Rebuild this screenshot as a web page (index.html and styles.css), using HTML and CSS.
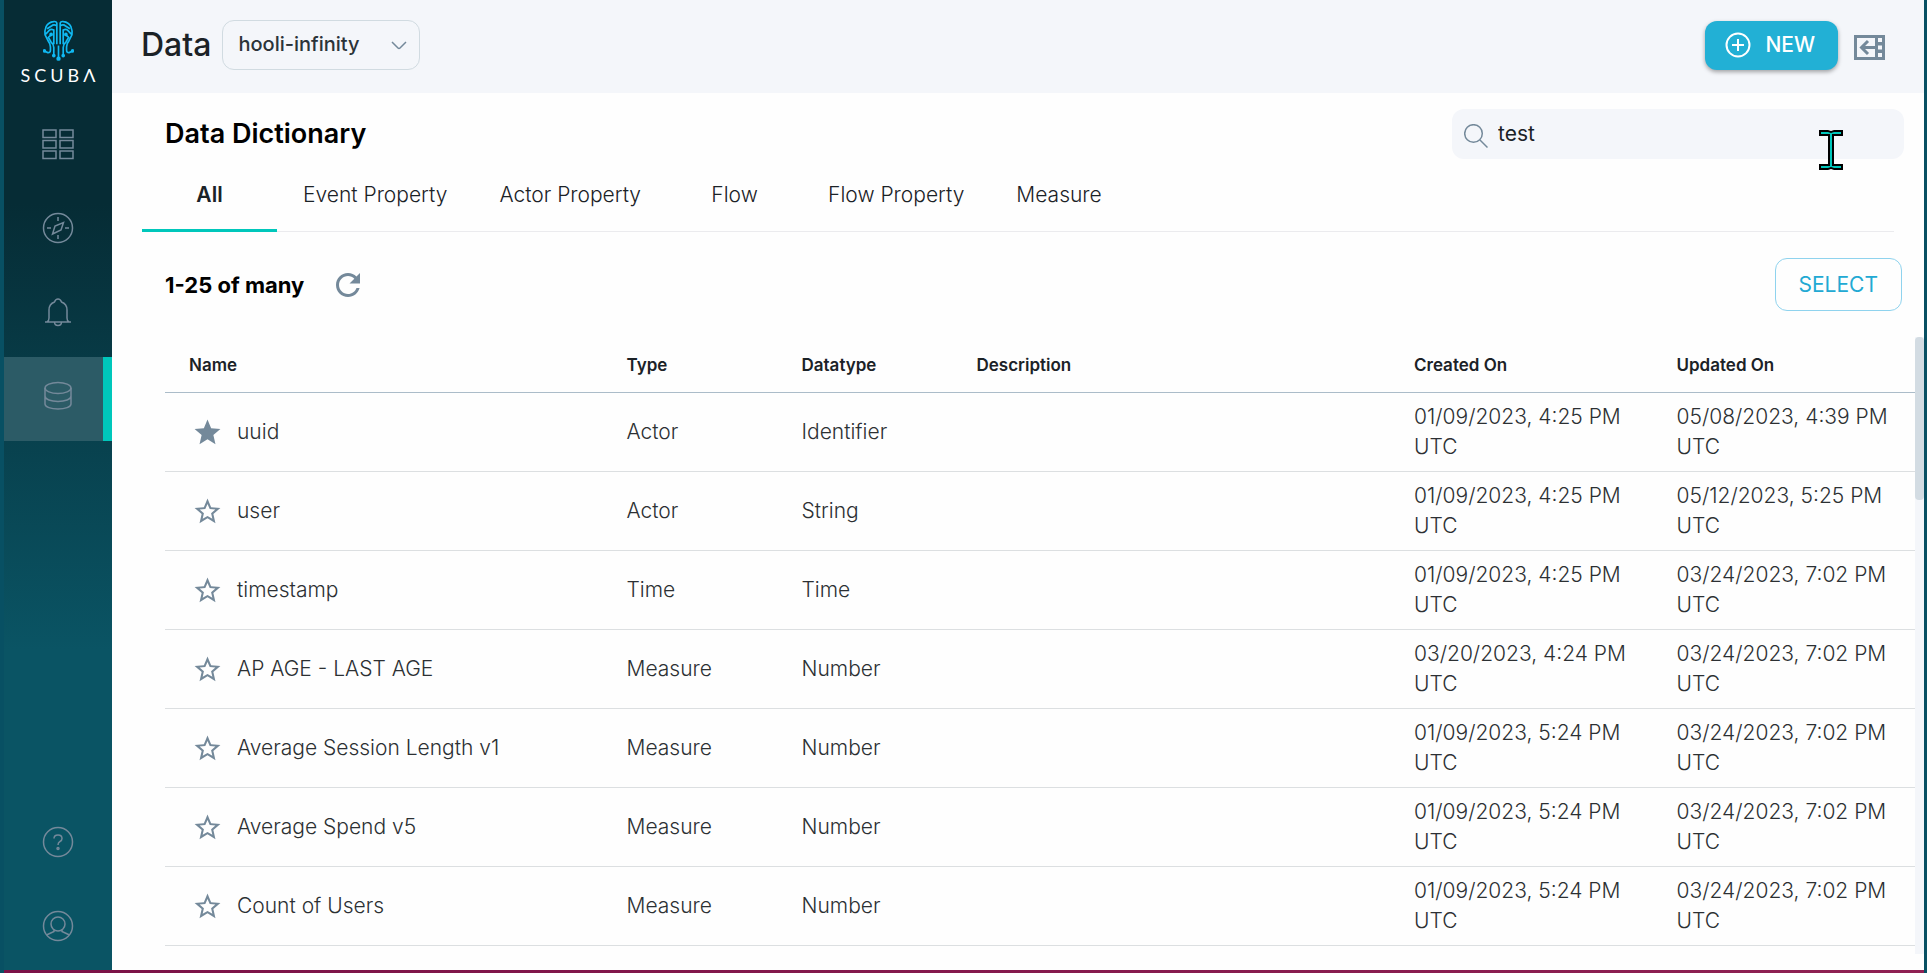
FILE: index.html
```html
<!DOCTYPE html>
<html lang="en">
<head>
<meta charset="utf-8">
<title>Data Dictionary</title>
<link rel="stylesheet" href="styles.css">
</head>
<body>
<svg class="defs" aria-hidden="true">
  <symbol id="star" viewBox="0 0 24 24"><path d="M22 9.24l-7.19-.62L12 2 9.19 8.63 2 9.24l5.46 4.73L5.82 21 12 17.27 18.18 21l-1.63-7.03L22 9.24zM12 15.4l-3.76 2.27 1-4.28-3.32-2.88 4.38-.38L12 6.1l1.71 4.04 4.38.38-3.32 2.88 1 4.28L12 15.4z"/></symbol>
  <symbol id="star-full" viewBox="0 0 24 24"><path d="M12 17.27L18.18 21l-1.64-7.03L22 9.24l-7.19-.61L12 2 9.19 8.63 2 9.24l5.46 4.73L5.82 21z"/></symbol>
  <symbol id="half-brain" viewBox="0 0 90 120">
    <path class="trace" d="M41 72V9Q39 3 31 5Q16 7 9 20Q4 32 6 44L15 62Q22 70 22 80V90Q22 98 14 97L4 92M41 17Q31 12 25 18L12 26M8 42L19 30Q24 26 32 30V72M24 44L16 52L23 64Q32 72 32 82V105"/>
    <circle cx="4" cy="92" r="3"/><circle cx="32" cy="106" r="3"/><circle cx="24" cy="43" r="3"/>
  </symbol>
</svg>
<div class="desktop">
  <div class="app">
    <aside class="sidebar">
      <a class="logo" href="#">
        <svg class="logo-mark" viewBox="0 0 92 122" aria-hidden="true">
          <use href="#half-brain" width="90" height="120"/>
          <g transform="translate(92 0) scale(-1 1)"><use href="#half-brain" width="90" height="120"/></g>
          <path class="trace" d="M46 76V114"/><circle cx="46" cy="115" r="4"/>
        </svg>
        <span class="logo-name">SCUBΛ</span>
      </a>
      <nav class="nav">
        <a class="nav-item" href="#" aria-label="Boards"><svg class="nav-icon" viewBox="0 0 32 32"><path d="M1 2h13v7.500H1zM18 2h13v7.500H18zM1 12.500h13v7.500H1zM18 12.500h13v7.500H18zM1 23h13v7.500H1zM18 23h13v7.500H18z"/></svg></a>
        <a class="nav-item" href="#" aria-label="Explore"><svg class="nav-icon" viewBox="0 0 32 32"><circle cx="16" cy="16" r="14.500"/><path d="M16 5v4M16 23v4M5 16h4M23 16h4M21.500 10.500L19 18l-8.500 4L13 14z"/></svg></a>
        <a class="nav-item" href="#" aria-label="Alerts"><svg class="nav-icon" viewBox="0 0 32 32"><path d="M3 26H29M5 26Q7 25 7 22V14Q7 8 12.500 6Q13.500 3 16 3T19.500 6Q25 8 25 14V22Q25 25 27 26M12.500 26Q12.500 29.500 16 29.500T19.500 26"/></svg></a>
        <a class="nav-item nav-item-active" href="#" aria-label="Data"><svg class="nav-icon" viewBox="0 0 32 32"><ellipse cx="16" cy="8" rx="13" ry="5.500"/><path d="M3 8V24C3 27 9 29 16 29S29 27 29 24V8M3 16C3 19.500 9 21.500 16 21.500S29 19.500 29 16"/></svg></a>
      </nav>
      <nav class="nav nav-bottom">
        <a class="nav-item" href="#" aria-label="Help"><svg class="nav-icon" viewBox="0 0 32 32"><circle cx="16" cy="16" r="14.500"/><path d="M12 12.500Q12 9 16 9T20 12.500Q20 14.500 18 15.500T16 19"/><circle cx="16" cy="22.500" r="1"/></svg></a>
        <a class="nav-item" href="#" aria-label="Account"><svg class="nav-icon" viewBox="0 0 32 32"><circle cx="16" cy="16" r="14.500"/><circle cx="16" cy="14" r="7"/><path d="M4.500 25L12 21.500V20M27.500 25L20 21.500V20"/></svg></a>
      </nav>
    </aside>
    <main class="main">
      <header class="topbar">
        <h1 class="page-title">Data</h1>
        <div class="dataset">
          <select class="dataset-select" aria-label="Dataset"><option>hooli-infinity</option></select>
          <svg class="dataset-arrow" viewBox="0 0 16 9" aria-hidden="true"><path d="M1 1L7 7Q8 8 9 7L15 1"/></svg>
        </div>
        <button class="new-button"><svg class="new-icon" viewBox="0 0 26 26" aria-hidden="true"><circle cx="13" cy="13" r="11.500"/><path d="M13 7v12M7 13h12"/></svg>NEW</button>
        <button class="panel-button" aria-label="Open panel"><svg class="panel-icon" viewBox="0 0 31 25"><path fill-rule="evenodd" d="M0 0H31V25H0zM3 3V22H21V3zM24 3v4h4V3zM24 10.500v4h4v-4zM24 18v4h4v-4z"/><path class="panel-arrow" d="M21 12.500H8M14 6L7.500 12.500L14 19"/></svg></button>
      </header>
      <section class="heading-row">
        <h2 class="section-title">Data Dictionary</h2>
        <label class="search">
          <svg class="search-icon" viewBox="0 0 24 24" aria-hidden="true"><circle cx="9.500" cy="9.500" r="8.800"/><path d="M16 16l7.500 7.500"/></svg>
          <input class="search-input" type="text" value="test" aria-label="Search">
        </label>
      </section>
      <div class="tabs" role="tablist">
        <button class="tab tab-active" role="tab" aria-selected="true">All</button>
        <button class="tab" role="tab">Event Property</button>
        <button class="tab" role="tab">Actor Property</button>
        <button class="tab" role="tab">Flow</button>
        <button class="tab" role="tab">Flow Property</button>
        <button class="tab" role="tab">Measure</button>
      </div>
      <section class="list-bar">
        <h3 class="count">1-25 of many</h3>
        <button class="refresh" aria-label="Refresh"><svg class="refresh-icon" viewBox="4 4 16 16"><path d="M17.650 6.350C16.200 4.900 14.210 4 12 4c-4.420 0-7.990 3.580-7.990 8s3.570 8 7.990 8c3.730 0 6.840-2.550 7.730-6h-2.080c-.82 2.330-3.040 4-5.650 4-3.310 0-6-2.690-6-6s2.690-6 6-6c1.660 0 3.140.69 4.220 1.780L13 11h7V4l-2.350 2.350z"/></svg></button>
        <button class="select-button">SELECT</button>
      </section>
      <div class="list">
        <table class="table">
          <colgroup><col class="col-wide"><col class="col-slim"><col class="col-slim"><col class="col-wide"><col class="col-date"><col class="col-date"></colgroup>
          <thead><tr><th>Name</th><th>Type</th><th>Datatype</th><th>Description</th><th>Created On</th><th>Updated On</th></tr></thead>
          <tbody>
            <tr><td><div class="name"><button class="star" aria-label="Unstar"><svg class="star-icon"><use href="#star-full"/></svg></button>uuid</div></td><td>Actor</td><td>Identifier</td><td></td><td>01/09/2023, 4:25 PM UTC</td><td>05/08/2023, 4:39 PM UTC</td></tr>
            <tr><td><div class="name"><button class="star" aria-label="Star"><svg class="star-icon"><use href="#star"/></svg></button>user</div></td><td>Actor</td><td>String</td><td></td><td>01/09/2023, 4:25 PM UTC</td><td>05/12/2023, 5:25 PM UTC</td></tr>
            <tr><td><div class="name"><button class="star" aria-label="Star"><svg class="star-icon"><use href="#star"/></svg></button>timestamp</div></td><td>Time</td><td>Time</td><td></td><td>01/09/2023, 4:25 PM UTC</td><td>03/24/2023, 7:02 PM UTC</td></tr>
            <tr><td><div class="name"><button class="star" aria-label="Star"><svg class="star-icon"><use href="#star"/></svg></button>AP AGE - LAST AGE</div></td><td>Measure</td><td>Number</td><td></td><td>03/20/2023, 4:24 PM UTC</td><td>03/24/2023, 7:02 PM UTC</td></tr>
            <tr><td><div class="name"><button class="star" aria-label="Star"><svg class="star-icon"><use href="#star"/></svg></button>Average Session Length v1</div></td><td>Measure</td><td>Number</td><td></td><td>01/09/2023, 5:24 PM UTC</td><td>03/24/2023, 7:02 PM UTC</td></tr>
            <tr><td><div class="name"><button class="star" aria-label="Star"><svg class="star-icon"><use href="#star"/></svg></button>Average Spend v5</div></td><td>Measure</td><td>Number</td><td></td><td>01/09/2023, 5:24 PM UTC</td><td>03/24/2023, 7:02 PM UTC</td></tr>
            <tr><td><div class="name"><button class="star" aria-label="Star"><svg class="star-icon"><use href="#star"/></svg></button>Count of Users</div></td><td>Measure</td><td>Number</td><td></td><td>01/09/2023, 5:24 PM UTC</td><td>03/24/2023, 7:02 PM UTC</td></tr>
          </tbody>
        </table>
        <div class="scrollbar"><div class="scroll-thumb"></div></div>
      </div>
    </main>
  </div>
</div>
<svg class="cursor" viewBox="0 0 26 42" aria-hidden="true"><path class="cursor-edge" d="M1 1H10L13 2L16 1H25V7H16V35H25V41H16L13 40L10 41H1V35H10V7H1z"/><path class="cursor-core" d="M3 3H10L13 4L16 3H23V5H14V37H23V39H16L13 38L10 39H3V37H12V5H3z"/></svg>
</body>
</html>
```
FILE: styles.css
```css
* { box-sizing: border-box; }
body { margin: 0; font-family: Inter, "Liberation Sans", sans-serif; color: #1b2227; }
button { border: 0; padding: 0; background: none; font: inherit; color: inherit; cursor: pointer; }
svg { display: block; }
h1, h2, h3 { margin: 0; }
.defs { position: absolute; width: 0; height: 0; }

.desktop {
  height: 100vh;
  display: grid;
  border-left: 4px solid #085063;
  border-right: 3px solid #085063;
  background: linear-gradient(90deg, #7b1247, #8f2153);
  padding-bottom: 3px;
}
.app { display: grid; grid-template-columns: 108px minmax(0, 1fr); min-height: 0; background: #fefefe; }

.sidebar { display: flex; flex-direction: column; background: linear-gradient(#062c35 0, #062c35 21%, #0a5464 67%, #0a5464); }
.logo { display: flex; flex-direction: column; align-items: center; height: 105px; padding-top: 20px; color: #fff; text-decoration: none; }
.logo-mark { width: 31px; height: 41px; fill: #10b9f2; stroke: #10b9f2; stroke-width: 5; }
.trace { fill: none; }
.logo-name { margin-top: 3px; padding-left: 4px; font-family: Lato, sans-serif; font-size: 18px; line-height: 22px; letter-spacing: 4px; }
.nav { display: flex; flex-direction: column; }
.nav-bottom { margin-top: auto; }
.nav-item { display: flex; align-items: center; justify-content: center; height: 84px; padding-bottom: 6px; }
.nav-bottom .nav-item { padding-bottom: 4px; }
.nav-item-active { background: #2c5b66; padding-left: 9px; border-right: 9px solid #00c7bb; }
.nav-icon { width: 32px; height: 32px; fill: none; stroke: #74899a; stroke-width: 1.500; }

.main { display: flex; flex-direction: column; min-width: 0; min-height: 0; }
.topbar { display: flex; align-items: center; height: 93px; padding: 0 39px 3px 29px; background: #f4f6fa; }
.page-title { font-size: 32px; font-weight: 500; line-height: 40px; }
.dataset { position: relative; margin-left: 11px; }
.dataset-select { appearance: none; width: 198px; height: 50px; padding: 0 15px 2px; border: 1px solid #d1dbe1; border-radius: 12px; background: transparent; font: 500 20px/24px Inter, sans-serif; color: #2b3338; }
.dataset-arrow { position: absolute; right: 13px; top: 21px; width: 16px; height: 9px; fill: none; stroke: #74899a; stroke-width: 1.500; pointer-events: none; }
.new-button { display: flex; align-items: center; gap: 14px; height: 49px; margin-left: auto; padding: 0 23px 0 20px; border-radius: 12px; background: #22b0d5; box-shadow: 0 2px 4px rgba(0, 0, 0, .35); color: #fff; font-size: 21px; font-weight: 500; line-height: 24px; }
.new-icon { width: 26px; height: 26px; fill: none; stroke: #fff; stroke-width: 2; }
.panel-button { margin: 5px 0 0 16px; }
.panel-icon { width: 31px; height: 25px; fill: #74899a; }
.panel-arrow { fill: none; stroke: #74899a; stroke-width: 3; }

.heading-row { display: flex; align-items: center; justify-content: space-between; padding: 16px 20px 0 53px; }
.section-title { font-size: 27px; font-weight: 600; line-height: 50px; color: #000; }
.search { display: flex; align-items: center; gap: 10px; width: 452px; height: 50px; padding: 0 12px; border-radius: 12px; background: #f4f6fa; }
.search-icon { width: 24px; height: 24px; margin-top: 3px; fill: none; stroke: #74899a; stroke-width: 1.500; }
.search-input { flex: 1; min-width: 0; border: 0; padding: 0; outline: 0; background: none; font: 400 21px/26px Inter, sans-serif; color: #1b2227; }

.tabs { display: flex; margin: 0 30px 0 30px; border-bottom: 1px solid #ebebee; }
.tab { min-width: 135px; height: 73px; margin-bottom: -1px; padding: 2px 26px 0; font-size: 21px; font-weight: 300; line-height: 26px; border-bottom: 3px solid transparent; }
.tab-active { font-weight: 600; border-bottom-color: #00c7bb; }

.list-bar { display: flex; align-items: center; padding: 26px 22px 26px 53px; }
.count { font-size: 22px; font-weight: 700; line-height: 28px; color: #000; }
.refresh { margin-left: 32px; }
.refresh-icon { width: 24px; height: 24px; fill: #74899a; }
.select-button { height: 53px; margin-left: auto; padding: 0 23px; border: 1px solid #8fd3ee; border-radius: 12px; color: #22a9d3; font-size: 21px; line-height: 26px; }

.list { display: flex; flex: 1; min-height: 0; margin-bottom: 16px; padding-left: 53px; overflow: hidden; }
.table { flex: 1; align-self: flex-start; table-layout: fixed; border-collapse: separate; border-spacing: 0; }
.col-wide { width: 25%; }
.col-slim { width: 10%; }
.col-date { width: 15%; }
.table th { height: 56px; padding: 0 24px; border-bottom: 1px solid #abbcc9; text-align: left; font-size: 17px; font-weight: 600; line-height: 24px; }
.table td { height: 79px; padding: 9px 20px 9px 24px; border-bottom: 1px solid #dcdfe1; font-size: 21px; font-weight: 300; line-height: 30px; color: #2c3033; }
.name { display: flex; align-items: center; gap: 12px; white-space: nowrap; }
.star { display: flex; justify-content: center; flex: none; width: 36px; }
.star-icon { width: 31px; height: 31px; fill: #74899a; }
.scrollbar { width: 9px; background: #f4f6fa; }
.scroll-thumb { height: 163px; border-radius: 4px; background: #d3dce3; }

.cursor { position: absolute; right: 83px; top: 129px; width: 26px; height: 42px; }
.cursor-edge { fill: #000; }
.cursor-core { fill: #00c7bb; }
```
